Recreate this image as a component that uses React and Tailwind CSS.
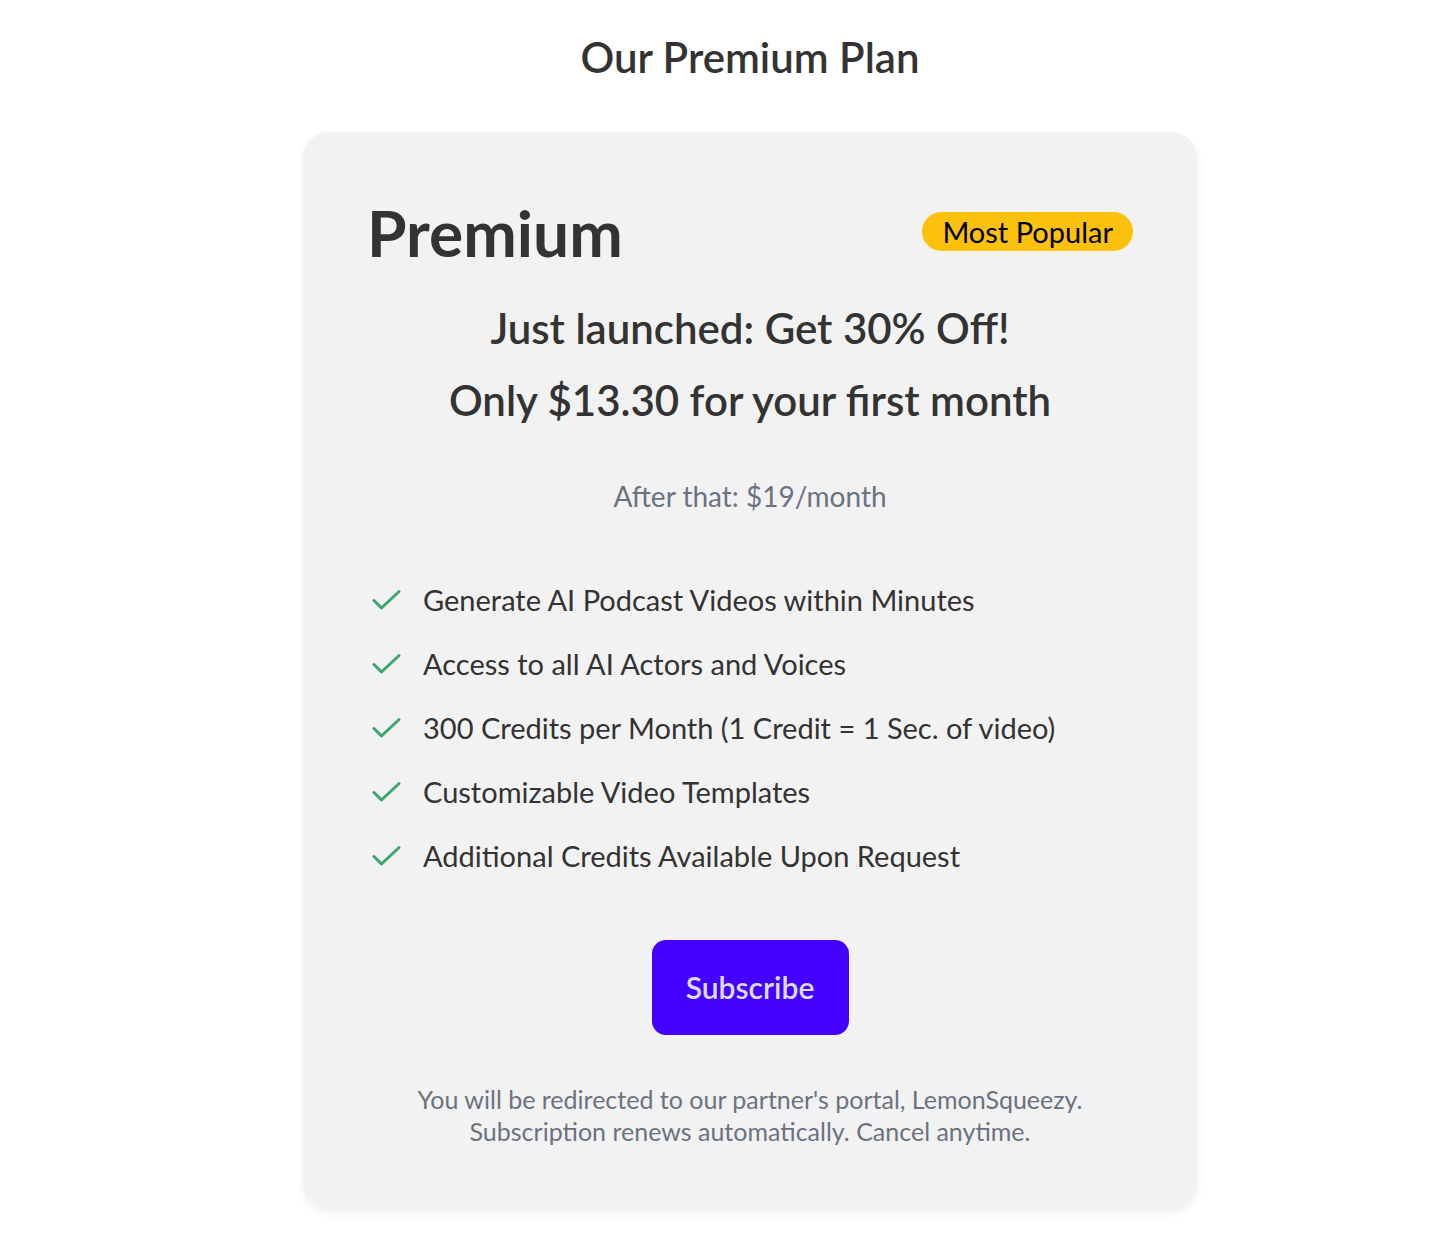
import React from 'react';

const features = [
  'Generate AI Podcast Videos within Minutes',
  'Access to all AI Actors and Voices',
  '300 Credits per Month (1 Credit = 1 Sec. of video)',
  'Customizable Video Templates',
  'Additional Credits Available Upon Request',
];

const Check = () => (
  <svg width="30" height="30" viewBox="0 0 30 30" fill="none" stroke="#3aa56c" strokeWidth="3" strokeLinecap="round" strokeLinejoin="round">
    <path d="M3 15.5l7.5 7.5L28 6.5" />
  </svg>
);

export default function App() {
  return (
    <div className="min-h-screen bg-white flex flex-col items-center pl-[50px] text-[#333333]" style={{ fontFamily: 'Lato, "Open Sans", sans-serif' }}>
      {/* 页面标题 */}
      <h1 className="mt-[30px] text-[42px] leading-[54px] font-semibold">Our Premium Plan</h1>

      {/* 套餐卡片 */}
      <div className="mt-[48px] w-[894px] bg-[#f2f2f2] rounded-[26px] shadow-[0_4px_8px_rgba(0,0,0,0.06)] px-[64px] pt-[66px] pb-[62px]">
        <div className="flex items-center justify-between">
          <h2 className="text-[64px] leading-[70px] font-bold">Premium</h2>
          <span className="bg-[#fcc10c] text-black text-[29px] leading-[39px] px-[20px] rounded-full -translate-y-[2px]">Most Popular</span>
        </div>

        <p className="mt-[35px] text-center text-[42px] leading-[50px] font-semibold">Just launched: Get 30% Off!</p>
        <p className="mt-[22px] text-center text-[42px] leading-[50px] font-semibold">Only $13.30 for your first month</p>
        <p className="mt-[53px] text-center text-[28px] leading-[36px] text-[#6b7280]">After that: $19/month</p>

        {/* 功能列表 */}
        <ul className="mt-[68px] flex flex-col gap-[28px]">
          {features.map((f) => (
            <li key={f} className="flex items-center gap-[22px] pl-[4px] text-[29px] leading-[36px]">
              <Check />
              <span>{f}</span>
            </li>
          ))}
        </ul>

        <div className="mt-[66px] flex justify-center">
          <button className="w-[197px] h-[95px] bg-[#4400ff] rounded-[14px] text-[#dcdcff] text-[30px] font-semibold">
            Subscribe
          </button>
        </div>

        <p className="mt-[48px] text-center text-[25px] leading-[32px] text-[#6b7280]">
          You will be redirected to our partner's portal, LemonSqueezy.
          <br />
          Subscription renews automatically. Cancel anytime.
        </p>
      </div>
    </div>
  );
}
